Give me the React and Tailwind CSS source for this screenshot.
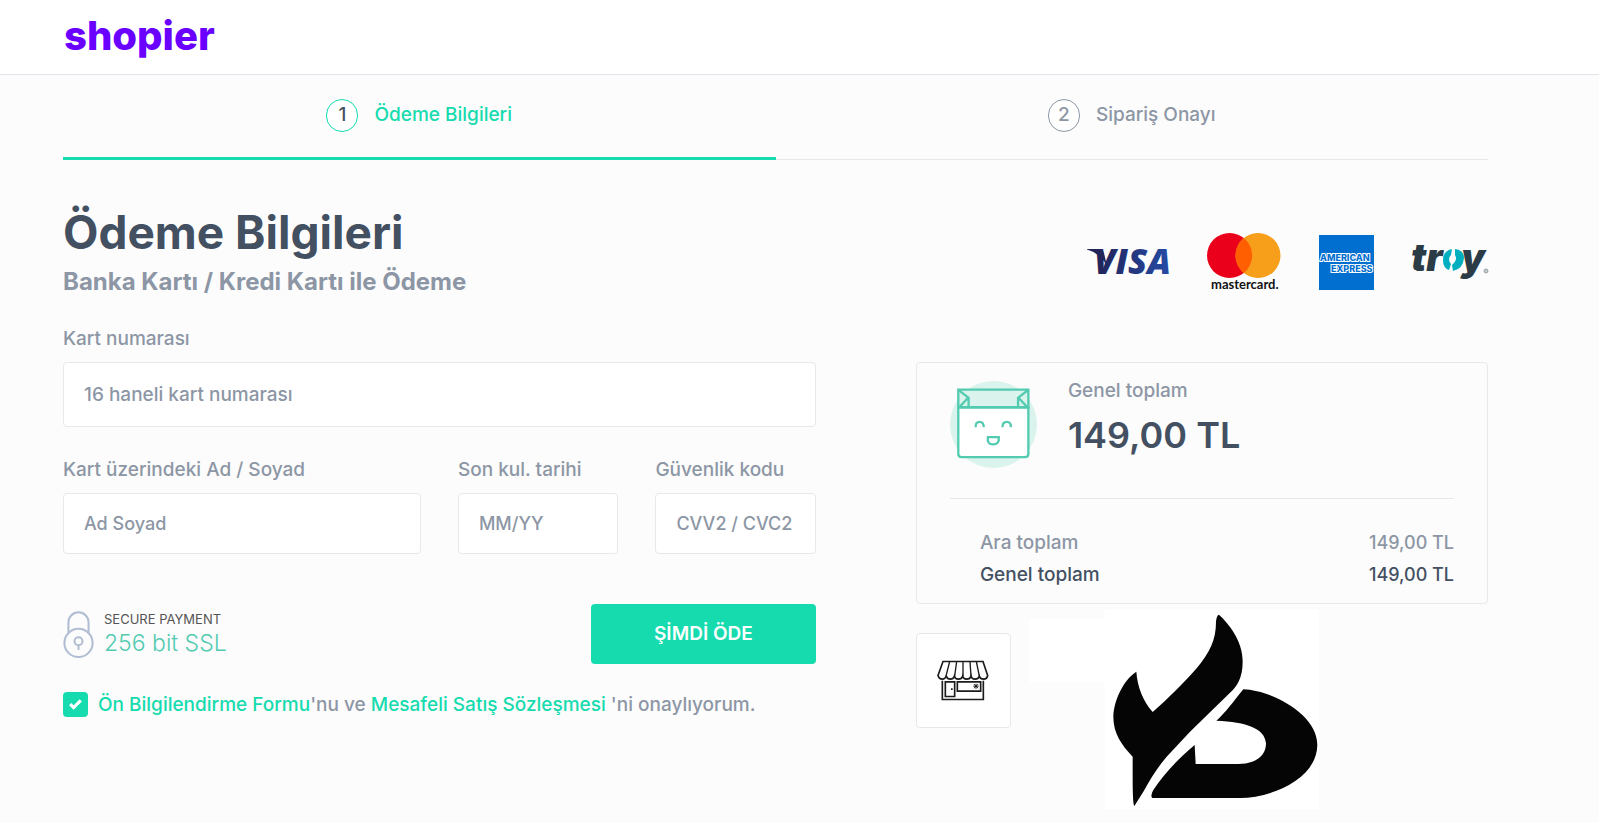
import { useState } from "react";

const STEPS = [
  { no: 1, label: "Ödeme Bilgileri", active: true },
  { no: 2, label: "Sipariş Onayı", active: false },
];

function Header() {
  return (
    <header className="h-[75px] bg-white border-b border-[#e4e4ec] pl-16 flex items-start">
      <a href="#" className="font-['Inter'] font-extrabold text-[40px] leading-[72px] text-[#6a00ff]">
        shopier
      </a>
    </header>
  );
}

function Steps() {
  return (
    <ol className="grid grid-cols-2">
      {STEPS.map((step) => (
        <li
          key={step.no}
          className={
            step.active
              ? "h-[85px] pt-6 flex items-start justify-center border-b-3 border-[#16dbae]"
              : "h-[85px] pt-6 flex items-start justify-center border-b border-[#e8e8ea]"
          }
        >
          <div className="flex items-center gap-4">
            <span
              className={
                step.active
                  ? "w-8 h-[33px] rounded-full border border-[#16dbae] bg-white text-[#435062] flex items-center justify-center"
                  : "w-8 h-[33px] rounded-full border border-[#8c96a5] bg-white text-[#8c96a5] flex items-center justify-center"
              }
            >
              {step.no}
            </span>
            <span className={step.active ? "text-[#16dbae]" : "text-[#8c96a5]"}>{step.label}</span>
          </div>
        </li>
      ))}
    </ol>
  );
}

function Field({ id, label, placeholder, inputClass }) {
  return (
    <div>
      <label htmlFor={id} className="block leading-[26px] mb-[10px]">
        {label}
      </label>
      <input
        id={id}
        type="text"
        placeholder={placeholder}
        className={`w-full px-5 bg-white border border-[#e8e8ea] rounded placeholder:text-[#8c96a5] outline-none ${inputClass}`}
      />
    </div>
  );
}

function LockIcon() {
  return (
    <svg width="31" height="47" viewBox="38 62 92 140" fill="none" stroke="#b0bdd2" strokeWidth="6">
      <path d="M54 127V96a30 30 0 0 1 60 0v31" />
      <circle cx="84" cy="157" r="42" />
      <circle cx="84" cy="152" r="12" />
      <path d="M84 164v14" />
    </svg>
  );
}

function PaymentForm() {
  const [accepted, setAccepted] = useState(true);

  return (
    <form onSubmit={(e) => e.preventDefault()}>
      <Field
        id="card-number"
        label="Kart numarası"
        placeholder="16 haneli kart numarası"
        inputClass="h-[65px] text-[19px]"
      />

      <div className="grid grid-cols-[2.23fr_1fr_1fr] gap-[37px] mt-[30px]">
        <Field id="card-name" label="Kart üzerindeki Ad / Soyad" placeholder="Ad Soyad" inputClass="h-[61px] text-lg" />
        <Field id="card-expiry" label="Son kul. tarihi" placeholder="MM/YY" inputClass="h-[61px] text-lg" />
        <Field id="card-cvc" label="Güvenlik kodu" placeholder="CVV2 / CVC2" inputClass="h-[61px] text-lg" />
      </div>

      <div className="mt-[50px] flex items-center justify-between">
        <div className="flex items-center gap-[10px]">
          <LockIcon />
          <div className="pt-[2px]">
            <div className="text-[13px] leading-4 text-[#555555] font-normal">SECURE PAYMENT</div>
            <div className="text-[23px] leading-8 text-[#52cbb0] font-light">256 bit SSL</div>
          </div>
        </div>
        <button type="submit" className="w-[225px] h-[60px] rounded bg-[#16dbae] text-white font-semibold">
          ŞİMDİ ÖDE
        </button>
      </div>

      <div className="mt-7 flex items-start gap-[10px]">
        <span className="relative w-[25px] h-[25px]">
          <input
            id="terms"
            type="checkbox"
            checked={accepted}
            onChange={(e) => setAccepted(e.target.checked)}
            className="block appearance-none w-[25px] h-[25px] rounded bg-[#16dbae]"
          />
          {accepted && (
            <svg className="absolute inset-0 pointer-events-none" width="25" height="25" viewBox="0 0 25 25">
              <path d="M7.2 12.2l3.4 3.4 7.2-7.2" fill="none" stroke="#fff" strokeWidth="3.2" />
            </svg>
          )}
        </span>
        <label htmlFor="terms" className="leading-[26px]">
          <a href="#" className="text-[#16dbae]">Ön Bilgilendirme Formu</a>'nu ve{" "}
          <a href="#" className="text-[#16dbae]">Mesafeli Satış Sözleşmesi</a> 'ni onaylıyorum.
        </label>
      </div>
    </form>
  );
}

function CardBrands() {
  return (
    <div className="flex items-center gap-[38px]">
      <svg className="overflow-visible" width="82" height="30" viewBox="0 0 82 30" role="img" aria-label="Visa">
        <defs>
          <linearGradient id="visa" gradientUnits="userSpaceOnUse" x1="0" y1="0" x2="82" y2="0">
            <stop offset="0.1" stopColor="#222357" />
            <stop offset="1" stopColor="#254aa5" />
          </linearGradient>
        </defs>
        <path d="M0 2h12q4 0 5 4l3 13Q13 6 0 2.600z" fill="url(#visa)" />
        <text x="7" y="27" fontFamily="Open Sans" fontWeight="800" fontStyle="italic" fontSize="35" fill="url(#visa)">
          VISA
        </text>
      </svg>
      <svg width="74" height="58" viewBox="0 0 74 58" role="img" aria-label="Mastercard">
        <circle cx="22.5" cy="22.5" r="22.5" fill="#eb001b" />
        <circle cx="51" cy="22.5" r="22.5" fill="#f79e1b" />
        <path d="M36.8 5a22.5 22.5 0 0 1 0 35 22.5 22.5 0 0 1 0-35z" fill="#ff5f00" />
        <text x="4" y="56" fontFamily="Lato" fontWeight="700" fontSize="13" fill="#111">
          mastercard.
        </text>
      </svg>
      <svg width="55" height="55" viewBox="0 0 55 55" role="img" aria-label="American Express">
        <rect width="55" height="55" fill="#016fd0" />
        <g fontFamily="Inter" fontWeight="800" fontSize="9" fill="#016fd0" stroke="#fff" strokeWidth="2" paintOrder="stroke">
          <text x="1" y="26">AMERICAN</text>
          <text x="12" y="37">EXPRESS</text>
        </g>
      </svg>
      <svg className="overflow-visible" width="76" height="36" viewBox="0 0 76 36" role="img" aria-label="Troy">
        <g fontFamily="Inter" fontWeight="900" fontStyle="italic" fontSize="38" fill="#2b3c46">
          <text x="-1" y="27">tr</text>
          <text x="49" y="27">y</text>
        </g>
        <path d="M40 5q-9 2-9 11 0 8 6 10l2-6q-4-5 0-9z" fill="#00afbf" />
        <path d="M43 5q9 1 9 9-1 11-11 13l-1-6q6-5 3-10z" fill="#00afbf" />
        <circle cx="74" cy="27" r="2" fill="#c4c9cc" stroke="#9aa3a8" />
      </svg>
    </div>
  );
}

function BagIcon() {
  return (
    <svg width="87" height="87" viewBox="30 32 262 262" fill="none" stroke="#52cbb0" strokeWidth="7">
      <circle cx="161" cy="163" r="131" fill="#daf3ec" stroke="none" />
      <path d="M55 111h211v141q0 9-9 9H64q-9 0-9-9z" fill="#fff" />
      <path d="M55 58h211v53H55z" fill="#daf3ec" />
      <path d="M57 60l29 23v28M60 109l26-28M264 60l-29 23v28M261 109l-26-28" />
      <path d="M107 171q0-16 12-16t13 16M188 171q0-16 13-16t12 16" />
      <path d="M144 201h33q2 22-17 22t-16-22z" />
    </svg>
  );
}

function Summary() {
  return (
    <section className="border border-[#e8e8ea] rounded px-[33px] h-[242px]">
      <div className="pt-[18px] flex gap-[31px] h-[136px] border-b border-[#e8e8ea]">
        <BagIcon />
        <div>
          <div className="leading-5">Genel toplam</div>
          <div className="text-4xl leading-[48px] mt-[10px] font-semibold text-[#435062]">149,00 TL</div>
        </div>
      </div>
      <dl className="pt-7 pl-[30px]">
        <div className="flex justify-between leading-8">
          <dt>Ara toplam</dt>
          <dd className="text-lg leading-8">149,00 TL</dd>
        </div>
        <div className="flex justify-between leading-8 text-[#435062]">
          <dt>Genel toplam</dt>
          <dd className="text-lg leading-8">149,00 TL</dd>
        </div>
      </dl>
    </section>
  );
}

function StoreIcon() {
  return (
    <svg width="52" height="41" viewBox="113 210 156 122" fill="none" stroke="#1c1c1c" strokeWidth="5">
      <path d="M131 214h120l14 42q-2 11-12 11t-13-9q-3 9-13 9t-12-9q-3 9-13 9t-12-9q-3 9-13 9t-12-9q-3 9-12 9t-12-9q-4 9-12 9-10 0-13-11z" />
      <path d="M151 214l-11 44M172 214l-6 44M191 214v44M212 214l3 44M231 214l9 44" strokeWidth="4" />
      <path d="M129 272v56h123v-56M138 275h28v44h-28zM174 275h70v28h-70z" />
      <path d="M155 297h5" />
      <path d="M222 288h16M230 281v15M224 282l12 12M236 282l-12 12" strokeWidth="3" />
    </svg>
  );
}

function StoreLogo() {
  return (
    <svg width="290" height="200" viewBox="387 57 870 600">
      <path d="M387 86h228v190H387zM614 57h643v600H614z" fill="#fff" />
      <path
        d="M957 74C985 100 1028 150 1028 215C1028 265 1010 290 990 308L870 425L800 500C770 535 750 570 730 605L703 648C697 640 698 560 698 500C665 465 640 430 640 380C642 330 670 270 709 245C712 290 730 335 758 366C800 330 850 280 890 235C930 185 948 150 948 95Q950 75 957 74Z"
        fill="#050505"
      />
      <path
        d="M1030 298C1110 300 1252 370 1252 465C1250 570 1110 624 1020 624L757 624Q750 618 760 600C790 555 830 510 884 465L887 522L1015 522C1070 522 1098 495 1098 460C1095 415 1040 396 949 392C975 370 1000 335 1030 298Z"
        fill="#050505"
      />
    </svg>
  );
}

export default function App() {
  return (
    <div className="min-h-screen bg-[#fcfcfc] font-['Inter',sans-serif] text-[19px] font-medium text-[#8c96a5]">
      <Header />
      <main className="pl-[63px] pr-[111px]">
        <Steps />

        <div className="pt-12 flex items-start justify-between">
          <div>
            <h1 className="text-[46px] leading-[48px] font-bold text-[#435062]">Ödeme Bilgileri</h1>
            <h2 className="text-2xl leading-8 mt-[10px] font-bold">Banka Kartı / Kredi Kartı ile Ödeme</h2>
          </div>
          <div className="pt-[25px]">
            <CardBrands />
          </div>
        </div>

        <div className="mt-7 grid grid-cols-[1.316fr_1fr] gap-[100px]">
          <PaymentForm />
          <div className="pt-9">
            <Summary />
            <div className="mt-[5px] flex items-start gap-[18px]">
              <div className="mt-6 w-[95px] h-[95px] bg-white border border-[#e8e8ea] rounded flex items-center justify-center">
                <StoreIcon />
              </div>
              <StoreLogo />
            </div>
          </div>
        </div>
      </main>
    </div>
  );
}
